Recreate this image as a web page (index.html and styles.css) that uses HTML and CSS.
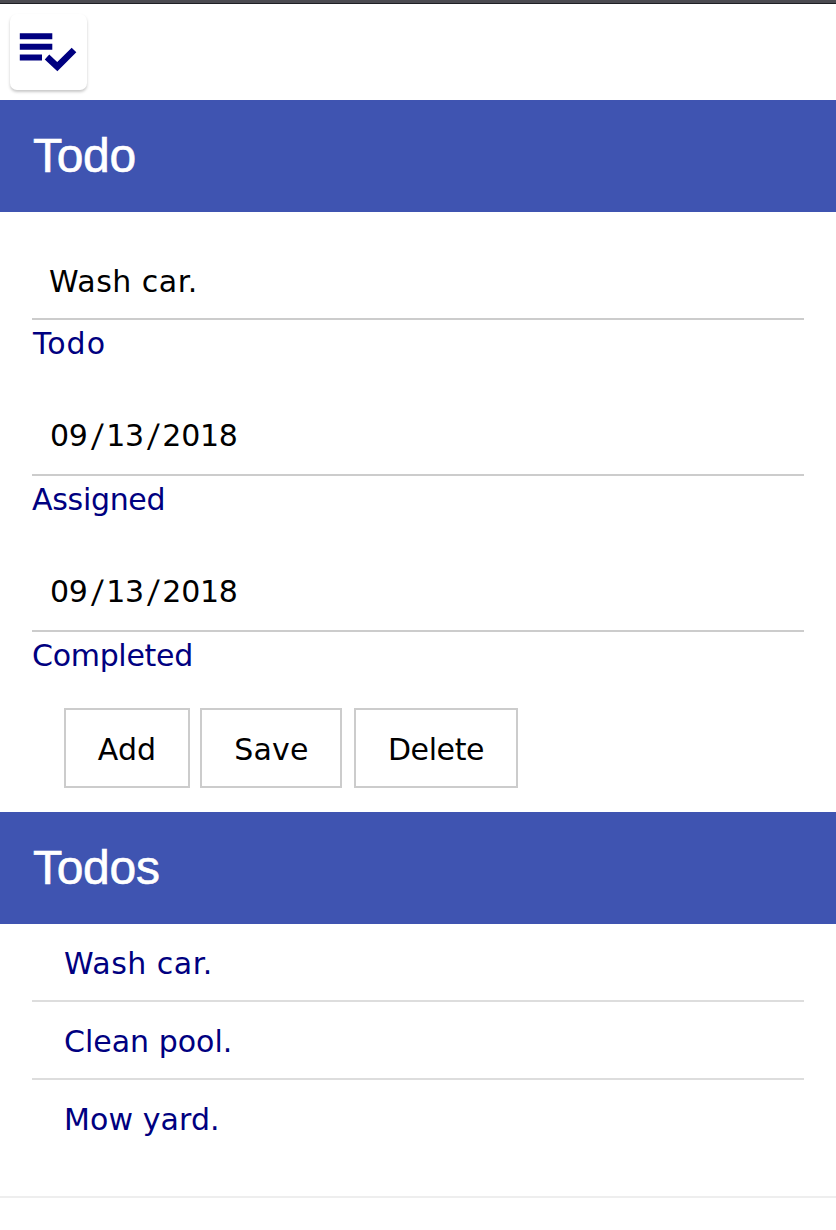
FILE: index.html
```
<!DOCTYPE html>
<html lang="en">
<head>
<meta charset="utf-8">
<title>Todo</title>
<link rel="stylesheet" href="styles.css">
</head>
<body>
<header class="toolbar">
  <button class="menu" aria-label="Todo list">
    <svg width="78" height="76" viewBox="0 0 78 76">
      <g fill="none" stroke="#000080" stroke-width="6">
        <path d="M9.800 22.200H42.300M9.800 32.800H42.300M9.800 43.400H32"/>
        <path d="M37 43L47.300 52.600L64 36" stroke-width="6.600"/>
      </g>
    </svg>
  </button>
</header>
<h1 class="title">Todo</h1>
<form class="form">
  <div class="field"><div class="value wide">Wash car.</div><label class="label wider">Todo</label></div>
  <div class="field"><div class="value date">09<span class="slash">/</span>13<span class="slash">/</span>2018</div><label class="label tight">Assigned</label></div>
  <div class="field"><div class="value date">09<span class="slash">/</span>13<span class="slash">/</span>2018</div><label class="label tight">Completed</label></div>
  <div class="actions">
    <button type="button" class="btn btn-add">Add</button>
    <button type="button" class="btn btn-save">Save</button>
    <button type="button" class="btn btn-delete">Delete</button>
  </div>
</form>
<h2 class="title">Todos</h2>
<ul class="list">
  <li class="item wide">Wash car.</li>
  <li class="item snug">Clean pool.</li>
  <li class="item">Mow yard.</li>
</ul>
<footer class="footer"></footer>
</body>
</html>
```
FILE: styles.css
```
* { box-sizing: border-box; }
body {
  margin: 0;
  height: 1230px;
  overflow: hidden;
  background: #fff;
  color: #000;
  font: 30px/36px "DejaVu Sans", Verdana, sans-serif;
  letter-spacing: 0.1px;
}
.toolbar {
  height: 100px;
  padding: 11px 0 0 10px;
  border-top: 3px solid #4b4a50;
  box-shadow: inset 0 1px 0 #1f1f24;
}
.menu {
  display: block;
  width: 77px;
  height: 76px;
  padding: 0;
  border: 0;
  border-radius: 7px;
  background: #fff;
  box-shadow: 0 2px 3px rgba(0, 0, 0, .22);
}
.menu svg { display: block; filter: blur(0.7px); }
.title {
  height: 112px;
  margin: 0;
  padding: 0 33px;
  background: #3f54b1;
  color: #fff;
  font: 400 48px/112px "Liberation Sans", Arial, sans-serif;
  letter-spacing: -0.3px;
  -webkit-text-stroke: 0.6px #fff;
}
.form { height: 600px; padding: 28px 32px 0; }
.field { height: 156px; }
.value {
  height: 80px;
  padding: 24px 17px 0;
  border-bottom: 2px solid #ccc;
}
.date { padding: 22px 18px 0; letter-spacing: -0.3px; }
.slash {
  display: inline-block;
  padding: 0 4.4px;
  transform: translateY(0.5px) skewX(-6deg) scaleY(1.07);
}
.label { display: block; padding-top: 6px; color: #000080; }
.wide { letter-spacing: 0.5px; }
.wider { padding-left: 1px; letter-spacing: 1px; }
.tight { letter-spacing: -0.3px; }
.snug { letter-spacing: 0; }
.actions { display: flex; padding-left: 32px; }
.btn {
  height: 80px;
  padding: 4px 0 0;
  border: 2px solid #ccc;
  background: #fff;
  color: #000;
  font: inherit;
  letter-spacing: inherit;
}
.btn-add { width: 126px; margin-right: 10px; }
.btn-save { width: 142px; margin-right: 12px; padding-left: 1px; letter-spacing: 0.2px; }
.btn-delete { width: 164px; letter-spacing: -0.4px; }
.list { height: 272px; margin: 0; padding: 0 32px; list-style: none; color: #000080; }
.item { height: 78px; padding: 22px 32px 0; border-bottom: 2px solid #ddd; }
.item:last-child { border-bottom: 0; }
.footer { border-top: 2px solid #eee; }
```
